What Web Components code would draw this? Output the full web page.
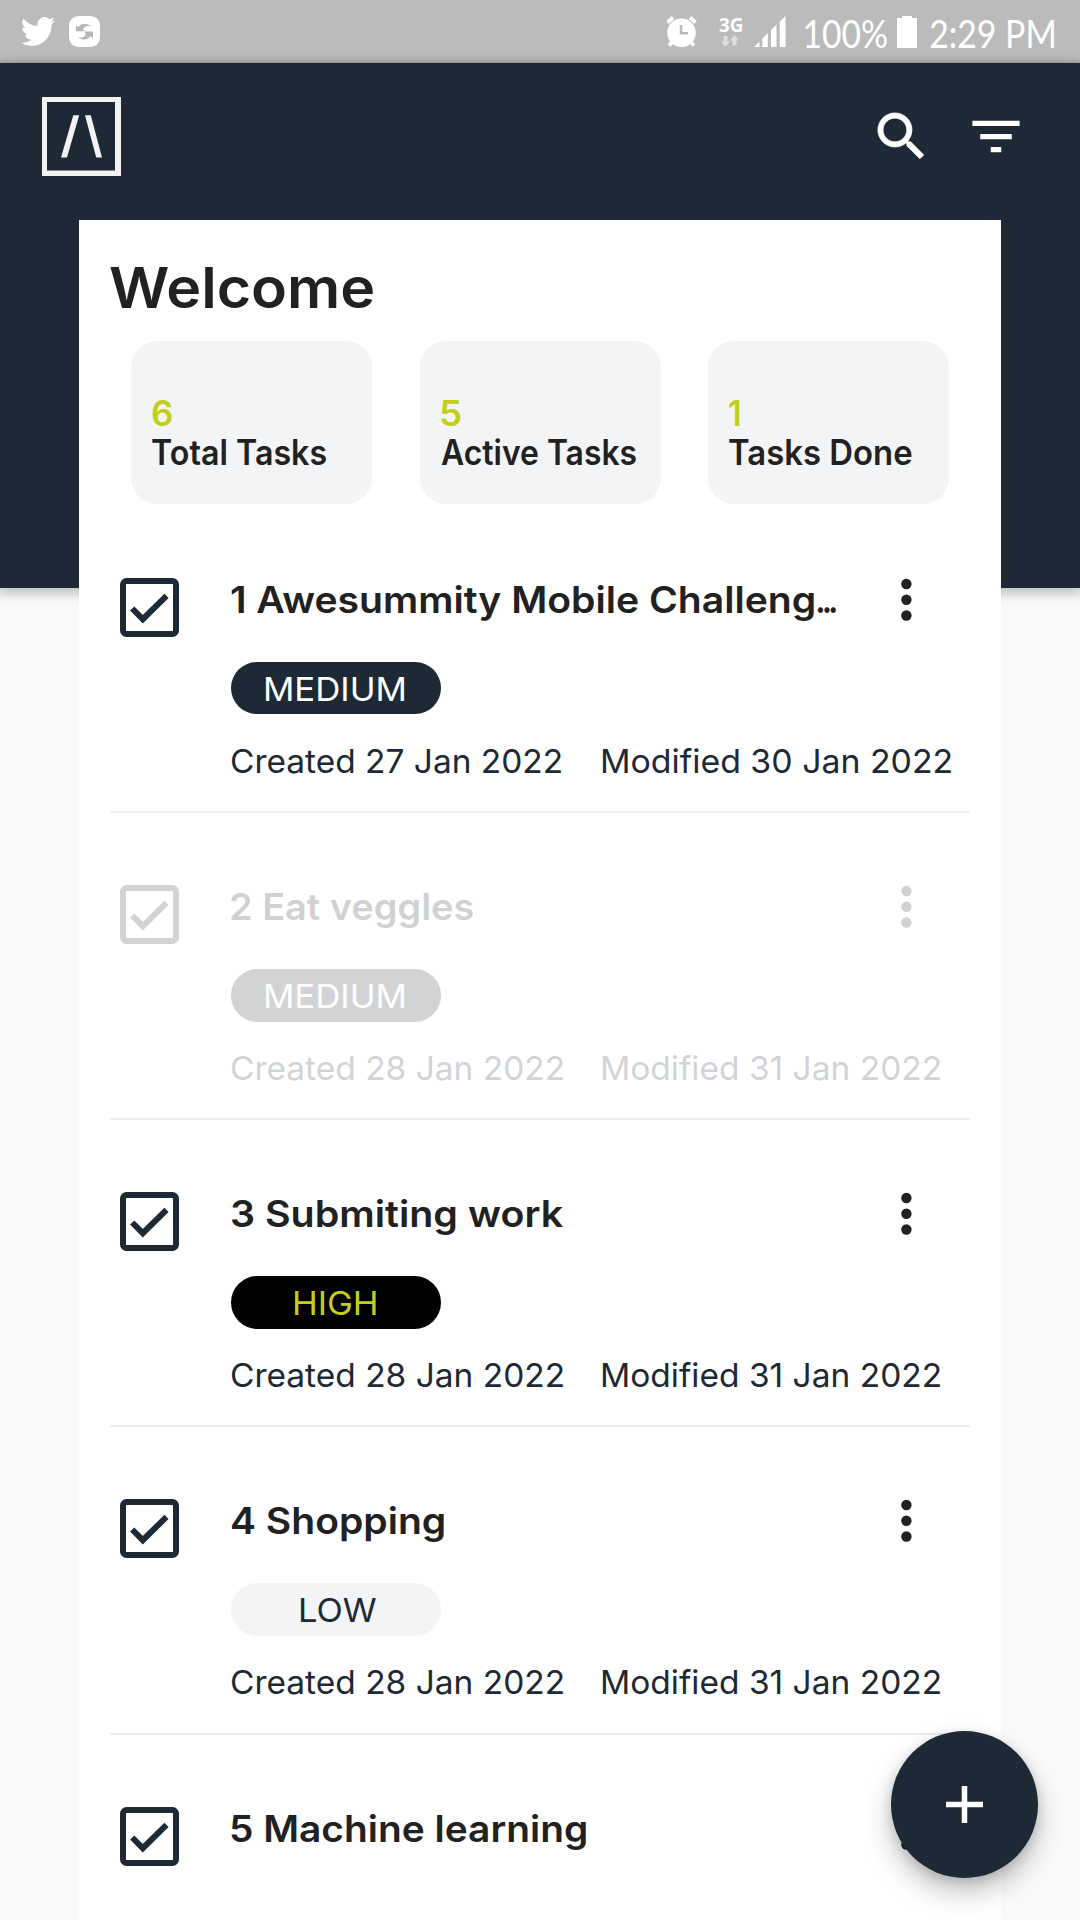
<!DOCTYPE html>
<html lang="en">
<head>
<meta charset="utf-8">
<title>Tasks</title>
<style>
html,body{margin:0;padding:0;background:#fafafa}
body{width:1080px;height:1920px;overflow:hidden;font-family:Inter,"Liberation Sans",sans-serif}
</style>
</head>
<body>
<task-app></task-app>
<script>
const make = (name, html, setup) => customElements.define(name, class extends HTMLElement {
  connectedCallback() {
    if (this.shadowRoot) return;
    const root = this.attachShadow({mode: 'open'});
    root.innerHTML = typeof html === 'function' ? html(this) : html;
    if (setup) setup(this, root);
  }
});

// Text whose ink fills a given width (attribute w).
make('fit-text', `<style>
  :host{display:block;white-space:pre;flex:none}
  span{display:inline-block;transform-origin:0 50%}
  </style><span><slot></slot></span>`, (el, root) => {
  const w = +el.getAttribute('w');
  const cs = getComputedStyle(el);
  const ctx = document.createElement('canvas').getContext('2d');
  ctx.font = `${cs.fontWeight} ${cs.fontSize} ${cs.fontFamily}`;
  if (cs.letterSpacing !== 'normal') ctx.letterSpacing = cs.letterSpacing;
  const m = ctx.measureText(el.textContent);
  const s = w / (m.actualBoundingBoxLeft + m.actualBoundingBoxRight);
  const span = root.querySelector('span');
  span.style.transform = `translateX(${m.actualBoundingBoxLeft * s}px) scaleX(${s})`;
  el.style.width = w + 'px';
});

make('status-bar', `<style>
  :host{display:flex;align-items:center;height:63px;box-sizing:border-box;background:linear-gradient(#bbb 60px,#aaa);color:#fff;padding:0 26px 0 21px}
  svg{display:block;flex:none}
  .sp{flex:1}
  fit-text{font:400 39px/40px Lato,sans-serif}
  .net{display:flex;flex-direction:column;align-items:center;width:24px;margin:1px 12px 0 21px}
  .net fit-text{font:700 20px/16px "Noto Sans",sans-serif;height:18px}
  </style>
  <svg width="34" height="29" viewBox="0 2.2 24 19.6" preserveAspectRatio="none" fill="#fff"><path d="M23.95 4.57a10 10 0 0 1-2.82.77 4.96 4.96 0 0 0 2.16-2.72c-.95.55-2 .95-3.13 1.18a4.92 4.92 0 0 0-8.38 4.48C7.69 8.1 4.07 6.13 1.64 3.16a4.82 4.82 0 0 0-.66 2.48c0 1.7.87 3.2 2.19 4.09a4.9 4.9 0 0 1-2.23-.62v.06a4.92 4.92 0 0 0 3.95 4.83 5 5 0 0 1-2.21.08 4.94 4.94 0 0 0 4.6 3.42A9.87 9.87 0 0 1 0 19.54a13.99 13.99 0 0 0 7.56 2.21c9.05 0 14-7.5 14-13.98 0-.21 0-.42-.02-.63a9.94 9.94 0 0 0 2.46-2.55z"/></svg>
  <svg style="margin-left:14px" width="31" height="31" viewBox="0 0 31 31"><rect width="31" height="31" rx="9.5" fill="#fff"/><g fill="#b7b7b7"><path d="M7 9.2l2.4 2C12 7 18.500 6.600 22 10.600 19 9.300 15 10 14.200 13.500l1.500 1.700H7z"/><path d="M24 22.300l-2.400-2C19 24.400 12.500 24.800 9 20.800c3 1.300 7 .6 7.800-2.900L15.300 15.500H24z"/></g></svg>
  <div class="sp"></div>
  <svg width="31" height="31" viewBox="0 0 31 31"><g stroke="#fff" stroke-width="3.800"><path d="M1.500 6.500L7 1.500M29.500 6.500L24 1.500"/><path d="M3 29.500l4-4M28 29.500l-4-4"/></g><circle cx="15.500" cy="16.800" r="14.300" fill="#fff"/><path d="M15 9v8.300h7" stroke="#bbb" stroke-width="2.600" fill="none"/></svg>
  <div class="net"><fit-text w="23">3G</fit-text>
  <svg width="20" height="12" viewBox="0 0 20 12" fill="#dedede"><path d="M3.500 1h4v5.500H10L5.500 12 1 6.500h2.500zM12.500 10.500h4V5.500H19L14.500 0 10 5.500h2.500z"/></svg></div>
  <svg width="32" height="31" viewBox="0 0 32 31" fill="#fff"><path d="M0 31l5.500-5.500V31zM8.300 31V22.500l5.500-5.500v14zM17 31V14l5.500-5.500V31zM25.800 31V5.500L31.500 0v31z"/></svg>
  <fit-text w="82" style="margin:2px 0 0 19px">100%</fit-text>
  <svg style="margin-left:10px" width="20" height="32" viewBox="0 0 20 32" fill="#fff"><path d="M0 2h5V0h10v2h5v30H0z"/></svg>
  <fit-text w="124" style="margin:2px 0 0 13px">2:29 PM</fit-text>`);

make('app-bar', `<style>
  :host{display:flex;align-items:flex-start;height:525px;box-sizing:border-box;background:#1d2935;padding:34px 52px 0 42px;box-shadow:0 3px 12px 2px rgba(0,0,0,.26)}
  svg{display:block;flex:none}.sp{flex:1}
  </style>
  <svg width="79" height="79" viewBox="0 0 79 79"><path fill="#f2f2f2" fill-rule="evenodd" d="M0 0h79v79H0zM5 5v68.500h68V5z"/><path fill="#f2f2f2" d="M31.300 18.300h5.900L25 60.500h-6zM43 18.300h5.800L60 60.500h-5.800z"/></svg>
  <div class="sp"></div>
  <svg style="margin-top:8px" width="63" height="63" viewBox="0 0 24 24" fill="#fff"><path stroke="#fff" stroke-width=".25" d="M15.500 14h-.79l-.28-.27A6.471 6.471 0 0 0 16 9.500 6.500 6.500 0 1 0 9.500 16c1.610 0 3.090-.59 4.230-1.570l.27.28v.79l5 4.990L20.490 19l-4.990-5zm-6 0C7.010 14 5 11.990 5 9.500S7.010 5 9.500 5 14 7.010 14 9.500 11.990 14 9.500 14z"/></svg>
  <svg style="margin:8px 0 0 31px" width="64" height="63" viewBox="0 0 24 24" fill="#fff"><path d="M10 18h4v-2h-4v2zM3 6v2h18V6H3zm3 7h12v-2H6v2z"/></svg>`);

make('stat-card', el => `<style>
  :host{display:block;box-sizing:border-box;width:241px;height:163.500px;border-radius:26px;background:#f3f4f6;padding:53px 0 0 21px;color:#212121;font-weight:600;font-size:35px;line-height:39px}
  .n{color:#c1d017}
  </style><fit-text class="n" w="${el.getAttribute('nw')}">${el.getAttribute('n')}</fit-text><fit-text w="${el.getAttribute('lw')}">${el.textContent}</fit-text>`);

make('priority-pill', `<style>
  :host{display:flex;justify-content:center;box-sizing:border-box;padding-right:3px;width:210px;height:52.500px;border-radius:27px;background:#1d2935;color:#fff;font-size:33px;line-height:54px}
  :host([level=high]){background:#000;color:#c1d017}
  :host([level=low]){background:#f3f4f6;color:#1d2935;padding:0 0 0 3px}
  </style><slot></slot>`);

make('task-row', el => {
  const a = n => el.getAttribute(n);
  return `<style>
  :host{display:flex;box-sizing:border-box;height:307.200px;padding:72px 0 0 10px;border-bottom:2px solid #eee;color:#1d2935}
  .box,.main,.menu{opacity:var(--fade,1)}
  :host([done]){--fade:.2}
  svg{display:block;flex:none}
  .main{margin-left:52px;width:660px}
  .title{display:flex;gap:3px;font-weight:600;font-size:37px;line-height:44px;color:#212121}
  .cut{letter-spacing:-4.500px}
  priority-pill{margin-top:40px}
  .dates{display:flex;font-size:33px;line-height:40px;margin-top:26.500px}
  .dates :first-child{margin-right:${a('gap')}px}
  </style>
  <svg class="box" width="59" height="59" viewBox="0 0 59 59" fill="none"><rect x="3" y="3" width="53" height="53" rx="3.500" stroke="#1d2935" stroke-width="6"/><path d="M12.200 30.500L22.800 41.200 46.500 17.800" stroke="#1d2935" stroke-width="6"/></svg>
  <div class="main"><div class="title"><fit-text w="${a('tw')}">${a('name')}</fit-text>${a('cut') ? `<fit-text class="cut" w="19">...</fit-text>` : ''}</div>
  ${a('p') ? `<priority-pill level="${a('p').toLowerCase()}"><fit-text w="${a('pw')}">${a('p')}</fit-text></priority-pill>
  <div class="dates"><fit-text w="${a('cw')}">${a('c')}</fit-text><fit-text w="${a('mw')}">${a('m')}</fit-text></div>` : ''}</div>
  <svg class="menu" width="30" height="44" viewBox="0 0 30 44" fill="#212121"><circle cx="15.400" cy="6" r="5.200"/><circle cx="15.400" cy="21.700" r="5.200"/><circle cx="15.400" cy="37.500" r="5.200"/></svg>`;
});

make('add-button', `<style>
  :host{position:absolute;left:891px;top:1731px;width:147px;height:147px;border-radius:50%;background:#1d2935;display:flex;align-items:center;justify-content:center;box-shadow:0 14px 28px rgba(0,0,0,.24),0 4px 12px rgba(0,0,0,.14)}
  </style><svg width="37" height="37" viewBox="0 0 37 37"><path d="M18.500 0v37M0 18.500h37" stroke="#fff" stroke-width="5.500"/></svg>`);

make('task-card', `<style>
  :host{display:block;position:relative;width:922px;height:1720px;box-sizing:border-box;margin:-367.600px 0 0 79px;padding:46px 31px 0;background:#fff;overflow:hidden}
  h1{margin:0;font-weight:600;font-size:56px;line-height:44px;color:#212121;height:74.500px}
  .stats{display:flex;justify-content:space-between;padding:0 21px;height:165px}
  </style>
  <h1><fit-text w="263">Welcome</fit-text></h1>
  <div class="stats">
  <stat-card n="6" nw="20" lw="174">Total Tasks</stat-card>
  <stat-card n="5" nw="20" lw="195">Active Tasks</stat-card>
  <stat-card n="1" nw="11" lw="183">Tasks Done</stat-card></div>
  <slot></slot>`);

make('task-app', `<style>
  :host{display:block;position:relative;width:1080px;height:1920px;overflow:hidden;background:#fafafa}
  </style>
  <status-bar></status-bar><app-bar></app-bar>
  <task-card>
  <task-row name="1 Awesummity Mobile Challeng" cut="1" tw="583" p="MEDIUM" pw="139" c="Created 27 Jan 2022" cw="330" m="Modified 30 Jan 2022" mw="349" gap="41"></task-row>
  <task-row done name="2 Eat veggles" tw="242" p="MEDIUM" pw="139" c="Created 28 Jan 2022" cw="332" m="Modified 31 Jan 2022" mw="338" gap="39"></task-row>
  <task-row name="3 Submiting work" tw="332" p="HIGH" pw="82" c="Created 28 Jan 2022" cw="332" m="Modified 31 Jan 2022" mw="338" gap="39"></task-row>
  <task-row name="4 Shopping" tw="213" p="LOW" pw="76" c="Created 28 Jan 2022" cw="332" m="Modified 31 Jan 2022" mw="338" gap="39"></task-row>
  <task-row name="5 Machine learning" tw="355"></task-row>
  </task-card>
  <add-button></add-button>`);
</script>
</body>
</html>
